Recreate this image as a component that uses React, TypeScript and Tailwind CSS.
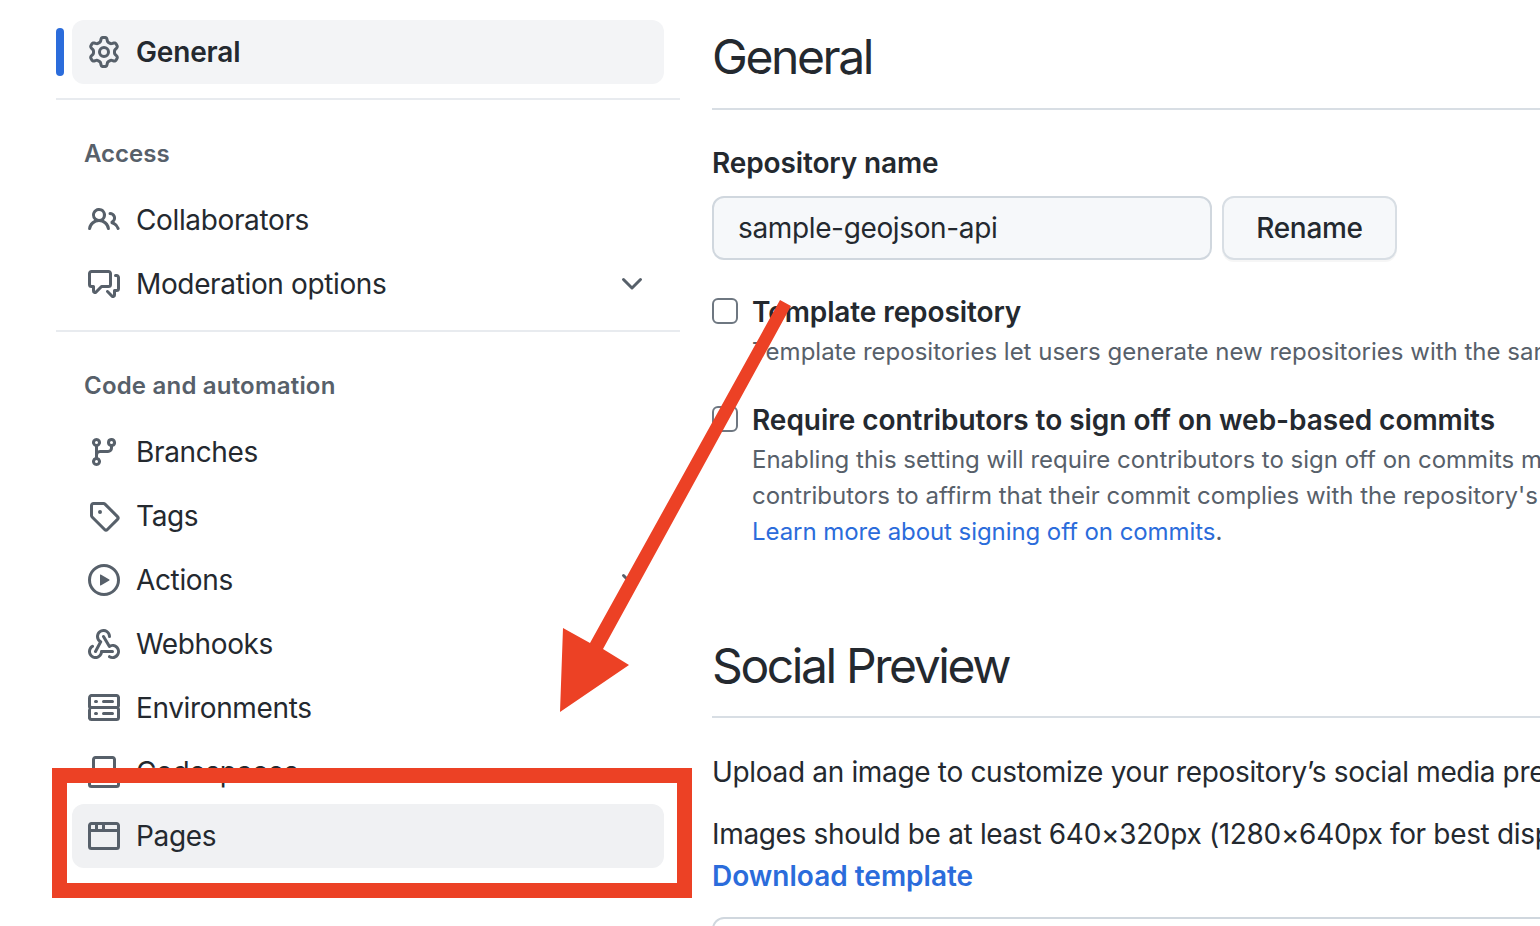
import type { ReactNode } from "react";

// octicons, 16px versions scaled up (the react-icons set only has the thin 24px ones)
const icons: Record<string, ReactNode> = {
  gear: (
    <path d="M8 0a8.2 8.2 0 0 1 .701.031C9.444.095 9.99.645 10.16 1.29l.288 1.107c.018.066.079.158.212.224.231.114.454.243.668.386.123.082.233.09.299.071l1.103-.303c.644-.176 1.392.021 1.82.63.27.385.506.792.704 1.218.315.675.111 1.422-.364 1.891l-.814.806c-.049.048-.098.147-.088.294.016.257.016.515 0 .772-.01.147.038.246.088.294l.814.806c.475.469.679 1.216.364 1.891a7.977 7.977 0 0 1-.704 1.217c-.428.61-1.176.807-1.82.63l-1.102-.302c-.067-.019-.177-.011-.3.071a5.909 5.909 0 0 1-.668.386c-.133.066-.194.158-.211.224l-.29 1.106c-.168.646-.715 1.196-1.458 1.26a8.006 8.006 0 0 1-1.402 0c-.743-.064-1.289-.614-1.458-1.26l-.289-1.106c-.018-.066-.079-.158-.212-.224a5.738 5.738 0 0 1-.668-.386c-.123-.082-.233-.09-.299-.071l-1.103.303c-.644.176-1.392-.021-1.82-.63a8.12 8.12 0 0 1-.704-1.218c-.315-.675-.111-1.422.363-1.891l.815-.806c.05-.048.098-.147.088-.294a6.214 6.214 0 0 1 0-.772c.01-.147-.038-.246-.088-.294l-.815-.806C.635 6.045.431 5.298.746 4.623a7.92 7.92 0 0 1 .704-1.217c.428-.61 1.176-.807 1.82-.63l1.102.302c.067.019.177.011.3-.071.214-.143.437-.272.668-.386.133-.066.194-.158.211-.224l.29-1.106C6.009.645 6.556.095 7.299.03 7.53.01 7.764 0 8 0Zm-.571 1.525c-.036.003-.108.036-.137.146l-.289 1.105c-.147.561-.549.967-.998 1.189-.173.086-.34.183-.5.29-.417.278-.97.423-1.529.27l-1.103-.303c-.109-.03-.175.016-.195.045-.22.312-.412.644-.573.99-.014.031-.021.11.059.19l.815.806c.411.406.562.957.53 1.456a4.709 4.709 0 0 0 0 .582c.032.499-.119 1.05-.53 1.456l-.815.806c-.081.08-.073.159-.059.19.162.346.353.677.573.989.02.03.085.076.195.046l1.102-.303c.56-.153 1.113-.008 1.53.27.161.107.328.204.501.29.447.222.85.629.997 1.189l.289 1.105c.029.109.101.143.137.146a6.6 6.6 0 0 0 1.142 0c.036-.003.108-.036.137-.146l.289-1.105c.147-.561.549-.967.998-1.189.173-.086.34-.183.5-.29.417-.278.97-.423 1.529-.27l1.103.303c.109.029.175-.016.195-.045.22-.313.411-.644.573-.99.014-.031.021-.11-.059-.19l-.815-.806c-.411-.406-.562-.957-.53-1.456a4.709 4.709 0 0 0 0-.582c-.032-.499.119-1.05.53-1.456l.815-.806c.081-.08.073-.159.059-.19a6.464 6.464 0 0 0-.573-.989c-.02-.03-.085-.076-.195-.046l-1.102.303c-.56.153-1.113.008-1.53-.27a4.44 4.44 0 0 0-.501-.29c-.447-.222-.85-.629-.997-1.189l-.289-1.105c-.029-.11-.101-.143-.137-.146a6.6 6.6 0 0 0-1.142 0ZM11 8a3 3 0 1 1-6 0 3 3 0 0 1 6 0ZM9.5 8a1.5 1.5 0 1 0-3.001.001A1.5 1.5 0 0 0 9.5 8Z" />
  ),
  people: (
    <path d="M2 5.5a3.5 3.5 0 1 1 5.898 2.549 5.508 5.508 0 0 1 3.034 4.084.75.75 0 1 1-1.482.235 4 4 0 0 0-7.9 0 .75.75 0 0 1-1.482-.236A5.507 5.507 0 0 1 3.102 8.05 3.493 3.493 0 0 1 2 5.5ZM11 4a3.001 3.001 0 0 1 2.22 5.018 5.01 5.01 0 0 1 2.56 3.012.749.749 0 0 1-.885.954.752.752 0 0 1-.549-.514 3.507 3.507 0 0 0-2.522-2.372.75.75 0 0 1-.574-.73v-.352a.75.75 0 0 1 .416-.672A1.5 1.5 0 0 0 11 5.5.75.75 0 0 1 11 4Zm-5.5-.5a2 2 0 1 0-.001 3.999A2 2 0 0 0 5.5 3.5Z" />
  ),
  discussion: (
    <path d="M1.75 1h8.5c.966 0 1.75.784 1.75 1.75v5.5A1.75 1.75 0 0 1 10.25 10H7.061l-2.574 2.573A1.458 1.458 0 0 1 2 11.543V10h-.25A1.75 1.75 0 0 1 0 8.25v-5.5C0 1.784.784 1 1.75 1ZM1.5 2.75v5.5c0 .138.112.25.25.25h1a.75.75 0 0 1 .75.75v2.19l2.72-2.72a.749.749 0 0 1 .53-.22h3.5a.25.25 0 0 0 .25-.25v-5.5a.25.25 0 0 0-.25-.25h-8.5a.25.25 0 0 0-.25.25Zm13 2a.25.25 0 0 0-.25-.25h-.5a.75.75 0 0 1 0-1.5h.5c.966 0 1.75.784 1.75 1.75v5.5A1.75 1.75 0 0 1 14.25 12H14v1.543a1.458 1.458 0 0 1-2.487 1.03L9.22 12.28a.749.749 0 0 1 .326-1.275.749.749 0 0 1 .734.215l2.22 2.22v-2.19a.75.75 0 0 1 .75-.75h1a.25.25 0 0 0 .25-.25Z" />
  ),
  branch: (
    <path d="M9.5 3.25a2.25 2.25 0 1 1 3 2.122V6A2.5 2.5 0 0 1 10 8.5H6a1 1 0 0 0-1 1v1.128a2.251 2.251 0 1 1-1.5 0V5.372a2.25 2.25 0 1 1 1.5 0v1.836A2.493 2.493 0 0 1 6 7h4a1 1 0 0 0 1-1v-.628A2.25 2.25 0 0 1 9.5 3.25Zm-6 0a.75.75 0 1 0 1.5 0 .75.75 0 0 0-1.5 0Zm8.25-.75a.75.75 0 1 0 0 1.5.75.75 0 0 0 0-1.5ZM4.25 12a.75.75 0 1 0 0 1.5.75.75 0 0 0 0-1.5Z" />
  ),
  tag: (
    <path d="M1 7.775V2.75C1 1.784 1.784 1 2.75 1h5.025c.464 0 .91.184 1.238.513l6.25 6.25a1.75 1.75 0 0 1 0 2.474l-5.026 5.026a1.75 1.75 0 0 1-2.474 0l-6.25-6.25A1.752 1.752 0 0 1 1 7.775Zm1.5 0c0 .066.026.13.073.177l6.25 6.25a.25.25 0 0 0 .354 0l5.025-5.025a.25.25 0 0 0 0-.354l-6.25-6.25a.25.25 0 0 0-.177-.073H2.75a.25.25 0 0 0-.25.25ZM6 5a1 1 0 1 1 0 2 1 1 0 0 1 0-2Z" />
  ),
  play: (
    <path d="M8 0a8 8 0 1 1 0 16A8 8 0 0 1 8 0ZM1.5 8a6.5 6.5 0 1 0 13 0 6.5 6.5 0 0 0-13 0Zm4.879-2.773 4.264 2.559a.25.25 0 0 1 0 .428l-4.264 2.559A.25.25 0 0 1 6 10.559V5.442a.25.25 0 0 1 .379-.215Z" />
  ),
  webhook: (
    <>
      <path d="M5.5 4.25a2.25 2.25 0 0 1 4.5 0 .75.75 0 0 0 1.5 0 3.75 3.75 0 1 0-6.14 2.889l-2.272 4.258a.75.75 0 0 0 1.324.706L7 7.25a.75.75 0 0 0-.309-1.015A2.25 2.25 0 0 1 5.5 4.25Z" />
      <path d="M7.364 3.607a.75.75 0 0 1 1.03.257l2.608 4.349a3.75 3.75 0 1 1-.628 6.785.75.75 0 0 1 .752-1.299 2.25 2.25 0 1 0-.033-3.88.75.75 0 0 1-1.03-.256L7.107 4.636a.75.75 0 0 1 .257-1.03Z" />
      <path d="M2.9 8.776A.75.75 0 0 1 2.625 9.8 2.25 2.25 0 1 0 6 11.75a.75.75 0 0 1 .75-.751h5.5a.75.75 0 0 1 0 1.5H7.425a3.751 3.751 0 1 1-5.55-3.998.75.75 0 0 1 1.024.274Z" />
    </>
  ),
  server: (
    <path d="M1.75 1h12.5c.966 0 1.75.784 1.75 1.75v4c0 .372-.116.717-.314 1 .198.283.314.628.314 1v4a1.75 1.75 0 0 1-1.75 1.75H1.75A1.75 1.75 0 0 1 0 13.25v-4c0-.372.116-.717.314-1a1.739 1.739 0 0 1-.314-1v-4C0 1.784.784 1 1.75 1ZM1.5 2.75v4c0 .138.112.25.25.25h12.5a.25.25 0 0 0 .25-.25v-4a.25.25 0 0 0-.25-.25H1.75a.25.25 0 0 0-.25.25Zm.25 5.75a.25.25 0 0 0-.25.25v4c0 .138.112.25.25.25h12.5a.25.25 0 0 0 .25-.25v-4a.25.25 0 0 0-.25-.25ZM7 4.75A.75.75 0 0 1 7.75 4h4.5a.75.75 0 0 1 0 1.5h-4.5A.75.75 0 0 1 7 4.75ZM7.75 10h4.5a.75.75 0 0 1 0 1.5h-4.5a.75.75 0 0 1 0-1.5ZM3 4.75A.75.75 0 0 1 3.75 4h.5a.75.75 0 0 1 0 1.5h-.5A.75.75 0 0 1 3 4.75ZM3.75 10h.5a.75.75 0 0 1 0 1.5h-.5a.75.75 0 0 1 0-1.5Z" />
  ),
  codespaces: (
    <>
      <path d="M0 11.25c0-.966.784-1.75 1.75-1.75h12.5c.966 0 1.75.784 1.75 1.75v3A1.75 1.75 0 0 1 14.25 16H1.75A1.75 1.75 0 0 1 0 14.25Zm2-9.5C2 .784 2.784 0 3.75 0h8.5C13.216 0 14 .784 14 1.75v5a1.75 1.75 0 0 1-1.75 1.75h-8.5A1.75 1.75 0 0 1 2 6.75Zm1.75-.25a.25.25 0 0 0-.25.25v5c0 .138.112.25.25.25h8.5a.25.25 0 0 0 .25-.25v-5a.25.25 0 0 0-.25-.25Zm-2 9.5a.25.25 0 0 0-.25.25v3c0 .138.112.25.25.25h12.5a.25.25 0 0 0 .25-.25v-3a.25.25 0 0 0-.25-.25Z" />
      <path d="M7 12.75a.75.75 0 0 1 .75-.75h4.5a.75.75 0 0 1 0 1.5h-4.5a.75.75 0 0 1-.75-.75Zm-4 0a.75.75 0 0 1 .75-.75h.5a.75.75 0 0 1 0 1.5h-.5a.75.75 0 0 1-.75-.75Z" />
    </>
  ),
  browser: (
    <path d="M0 2.75C0 1.784.784 1 1.75 1h12.5c.966 0 1.75.784 1.75 1.75v10.5A1.75 1.75 0 0 1 14.25 15H1.75A1.75 1.75 0 0 1 0 13.25ZM14.5 6h-13v7.25c0 .138.112.25.25.25h12.5a.25.25 0 0 0 .25-.25Zm-6-3.5v2h6V2.75a.25.25 0 0 0-.25-.25ZM5 2.5v2h2v-2Zm-3.25 0a.25.25 0 0 0-.25.25V4.5h2v-2Z" />
  ),
  chevron: (
    <path d="M12.78 5.22a.749.749 0 0 1 0 1.06l-4.25 4.25a.749.749 0 0 1-1.06 0L3.22 6.28a.749.749 0 1 1 1.06-1.06L8 8.939l3.72-3.719a.749.749 0 0 1 1.06 0Z" />
  ),
};

function Octicon({ name, className }: { name: string; className?: string }) {
  return (
    <svg
      width={32}
      height={32}
      viewBox="0 0 16 16"
      fill="currentColor"
      className={className}
    >
      {icons[name]}
    </svg>
  );
}

type NavItem = { label: string; icon: string; chevron?: boolean };

const accessItems: NavItem[] = [
  { label: "Collaborators", icon: "people" },
  { label: "Moderation options", icon: "discussion", chevron: true },
];

const codeItems: NavItem[] = [
  { label: "Branches", icon: "branch" },
  { label: "Tags", icon: "tag" },
  { label: "Actions", icon: "play", chevron: true },
  { label: "Webhooks", icon: "webhook" },
  { label: "Environments", icon: "server" },
  { label: "Codespaces", icon: "codespaces" },
];

function NavRow({ item }: { item: NavItem }) {
  return (
    <div className="flex h-16 items-center rounded-xl pl-4 pr-4 ml-4 w-[592px]">
      <Octicon name={item.icon} className="shrink-0 text-[#57606a]" />
      <span className="ml-4 text-[28px] tracking-[-0.36px] text-[#24292f]">
        {item.label}
      </span>
      {item.chevron && (
        <Octicon name="chevron" className="ml-auto text-[#57606a]" />
      )}
    </div>
  );
}

function Sidebar() {
  return (
    <aside className="ml-14 w-[624px] shrink-0 pt-5">
      <div className="flex items-center">
        <div className="h-12 w-2 rounded-md bg-[#2b6cdb]" />
        <div className="ml-2 flex h-16 w-[592px] items-center rounded-xl bg-[#f3f4f6] pl-4">
          <Octicon name="gear" className="text-[#57606a]" />
          <span className="ml-4 text-[28px] tracking-[-0.15px] font-semibold text-[#24292f]">
            General
          </span>
        </div>
      </div>
      <div className="mt-[14px] h-0.5 bg-[#e8ebef]" />

      <h3 className="ml-7 mt-[42px] h-6 text-2xl leading-6 font-semibold text-[#57606a]">
        Access
      </h3>
      <div className="mt-[22px]">
        {accessItems.map((item) => (
          <NavRow key={item.label} item={item} />
        ))}
      </div>
      <div className="mt-[14px] h-0.5 bg-[#e8ebef]" />

      <h3 className="ml-7 mt-[42px] h-6 text-2xl leading-6 tracking-[0.2px] font-semibold text-[#57606a]">
        Code and automation
      </h3>
      <div className="mt-[22px]">
        {codeItems.map((item) => (
          <NavRow key={item.label} item={item} />
        ))}
      </div>
      <div className="ml-4 flex h-16 w-[592px] items-center rounded-xl bg-[#f0f1f3] pl-4">
        <Octicon name="browser" className="text-[#57606a]" />
        <span className="ml-4 text-[28px] tracking-[-0.36px] text-[#24292f]">
          Pages
        </span>
      </div>
    </aside>
  );
}

function Checkbox() {
  return (
    <div className="mt-0.5 h-[26px] w-[26px] shrink-0 rounded-md border-2 border-[#6e7781] bg-white" />
  );
}

function Main() {
  return (
    <main className="ml-8 min-w-0 flex-1 overflow-hidden whitespace-nowrap">
      <h1 className="mt-[26px] h-[62px] text-[48px] leading-[62px] tracking-[-2.4px] font-normal text-[#24292f]">
        General
      </h1>
      <div className="mt-5 h-0.5 bg-[#d8dee4]" />

      <h2 className="mt-[35px] h-9 text-[28px] leading-9 tracking-[-0.13px] font-semibold text-[#24292f]">
        Repository name
      </h2>
      <div className="mt-[15px] flex">
        <div className="flex h-16 w-[500px] items-center rounded-xl border-2 border-[#d0d7de] bg-[#f6f8fa] px-6 text-[28px] tracking-[-0.36px] text-[#24292f]">
          sample-geojson-api
        </div>
        <div className="ml-[10px] flex h-16 w-[175px] items-center justify-center rounded-xl border-2 border-[#d8dee4] bg-[#f6f8fa] text-[28px] tracking-[-0.3px] font-medium text-[#24292f] shadow-[0_2px_0_rgba(27,31,36,0.04)]">
          Rename
        </div>
      </div>

      <div className="mt-9 flex">
        <Checkbox />
        <div className="ml-[14px]">
          <div className="-mt-0.5 h-9 text-[28px] leading-9 tracking-[-0.1px] font-semibold text-[#24292f]">
            Template repository
          </div>
          <p className="mt-1 h-9 text-2xl leading-9 text-[#57606a]">
            Template repositories let users generate new repositories with the
            same directory structure and files.
          </p>
        </div>
      </div>

      <div className="mt-[34px] flex">
        <Checkbox />
        <div className="ml-[14px]">
          <div className="-mt-0.5 h-9 text-[28px] leading-9 tracking-[-0.04px] font-semibold text-[#24292f]">
            Require contributors to sign off on web-based commits
          </div>
          <p className="mt-1 h-9 text-2xl leading-9 text-[#57606a]">
            Enabling this setting will require contributors to sign off on
            commits made through GitHub's web interface.
          </p>
          <p className="h-9 text-2xl leading-9 text-[#57606a]">
            contributors to affirm that their commit complies with the
            repository's terms and license.
          </p>
          <p className="h-9 text-2xl leading-9 tracking-[-0.07px] text-[#57606a]">
            <span className="text-[#2b6cdb]">
              Learn more about signing off on commits
            </span>
            .
          </p>
        </div>
      </div>

      <h1 className="mt-[85px] h-[62px] text-[48px] leading-[62px] tracking-[-2.4px] font-normal text-[#24292f]">
        Social Preview
      </h1>
      <div className="mt-[19px] h-0.5 bg-[#d8dee4]" />

      <p className="mt-9 h-9 text-[28px] leading-9 tracking-[-0.33px] text-[#24292f]">
        Upload an image to customize your repository’s social media preview.
      </p>
      <p className="mt-[26px] h-9 text-[28px] leading-9 tracking-[-0.33px] text-[#24292f]">
        Images should be at least 640×320px (1280×640px for best display).
      </p>
      <p className="mt-1.5 h-9 text-[28px] leading-9 font-semibold text-[#2b6cdb]">
        Download template
      </p>
      <div className="mt-[23px] h-[200px] w-[1000px] rounded-xl border-2 border-[#d0d7de]" />
    </main>
  );
}

export default function App() {
  return (
    <div className="relative flex h-[926px] w-[1540px] overflow-hidden bg-white font-['Inter',sans-serif]">
      <Sidebar />
      <Main />

      {/* annotation drawn over the screenshot */}
      <div className="absolute left-[52px] top-[768px] h-[130px] w-[640px] border-[15px] border-[#ec4125]" />
      <svg
        className="absolute left-0 top-0"
        width="1540"
        height="926"
        viewBox="0 0 1540 926"
      >
        <polygon
          fill="#ec4125"
          points="780,300 791,306 603,649 629,665 560,712 563,628 590,643"
        />
      </svg>
    </div>
  );
}
